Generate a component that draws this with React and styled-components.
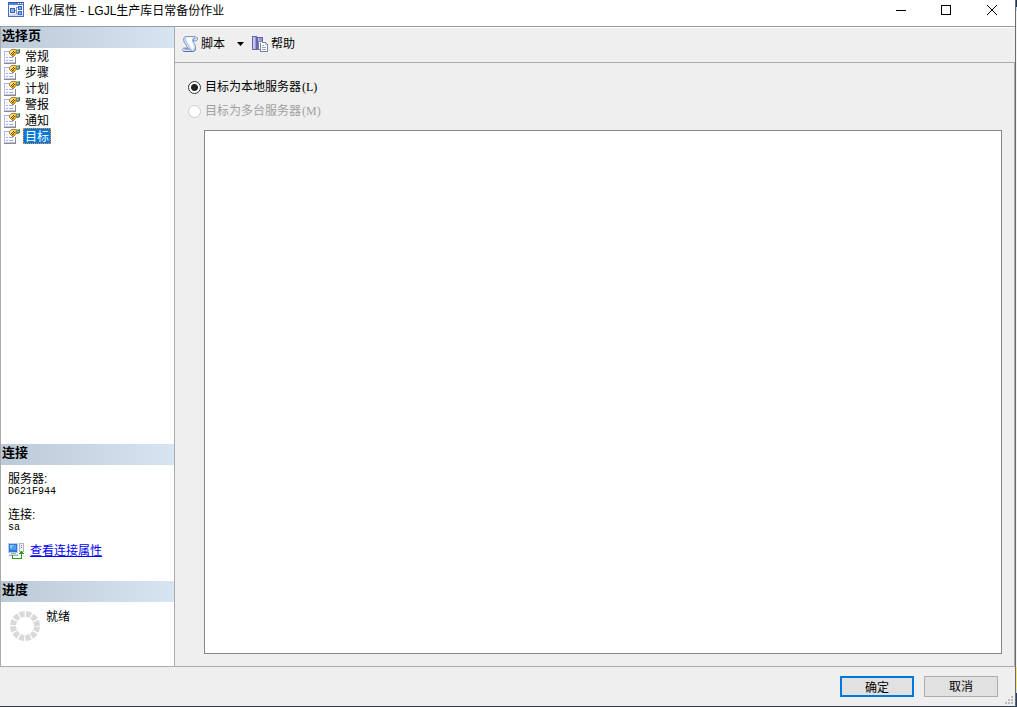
import React, { useState } from "react";
import styled, { createGlobalStyle } from "styled-components";

const GlobalStyle = createGlobalStyle`
*{
  box-sizing:border-box;
}
body{
  margin:0;
  background:linear-gradient(#1f3354 0 7px,#c5dcec 7px 11px,#f4f4f4 11px calc(100% - 40px),#f5e67e calc(100% - 40px) calc(100% - 18px),#d5dce6 calc(100% - 18px) calc(100% - 14px),#2b3c5c calc(100% - 14px));
  color:#000;
  font-family:"Liberation Sans","Noto Sans CJK SC",sans-serif;
  font-size:12px;
  line-height:16px;
}
button,input{
  font:inherit;
  color:inherit;
  margin:0;
}
svg{
  display:block;
  flex:none;
}
`;

const Window = styled.div`
display:flex;
flex-direction:column;
height:100vh;
margin-right:1px;
background:#efefef;
border-right:1px solid #6b6b6b;
border-bottom:1px solid #2c3a4e;
`;

const TitleBar = styled.header`
display:flex;
align-items:center;
height:27px;
padding:0 0 6px 8px;
gap:5px;
background:#fff;
border-bottom:1px solid #9b9b9f;
`;

const Title = styled.h1`
flex:1;
margin:0;
padding-top:2px;
font-size:12px;
font-weight:400;
`;

const WindowControls = styled.div`
display:flex;
`;

const WindowButton = styled.button`
display:flex;
align-items:center;
justify-content:center;
width:${(props) => (props.$narrow ? "45px" : "46px")};
height:20px;
padding:0;
border:none;
background:none;
`;

const Body = styled.div`
display:flex;
flex:1;
min-height:0;
border-bottom:1px solid #a9abb1;
`;

const Sidebar = styled.aside`
display:flex;
flex-direction:column;
width:175px;
background:#fff;
border:solid #a9abb1;
border-width:0 1px;
`;

const PanelTitle = styled.h2`
height:21px;
margin:0;
padding:0 1px;
font-size:13px;
line-height:18px;
font-weight:700;
background:linear-gradient(to right,#bccad8,#d7e4f2);
`;

const PageList = styled.ul`
flex:1;
margin:0;
padding:0;
list-style:none;
`;

const PageButton = styled.button`
display:flex;
align-items:center;
gap:2px;
height:16px;
padding:0 0 0 3px;
border:none;
background:none;
`;

const PageName = styled.span`
height:16px;
padding:0 1px;
line-height:16px;
border:1px ${(props) => (props.$selected ? "dotted #ff8a28" : "solid transparent")};
background:${(props) => (props.$selected ? "#0078d7" : "none")};
color:${(props) => (props.$selected ? "#fff" : "#000")};
`;

const Connection = styled.div`
display:flex;
flex-direction:column;
height:116px;
padding:8px 7px;
`;

const Details = styled.dl`
margin:0;
dt{
  line-height:13px;
}
dd{
  margin:0;
  font-family:"Liberation Mono",monospace;
  font-size:10px;
  line-height:11px;
}
dd + dt{
  margin-top:12px;
}
`;

const LinkRow = styled.div`
display:flex;
align-items:center;
gap:6px;
margin-top:10px;
a{
  color:#0000ff;
}
`;

const Progress = styled.div`
display:flex;
gap:5px;
height:64px;
padding:7px 8px;
`;

const Main = styled.main`
display:flex;
flex:1;
flex-direction:column;
min-width:0;
border-top:1px solid #fff;
`;

const Toolbar = styled.div`
display:flex;
align-items:center;
height:35px;
padding:0 7px 2px;
border-bottom:1px solid #a9abb1;
`;

const ToolButton = styled.button`
display:flex;
align-items:center;
gap:3px;
padding:0;
border:none;
background:none;
`;

const DropButton = styled.button`
display:flex;
align-items:center;
justify-content:center;
width:27px;
height:20px;
padding:0 0 0 3px;
border:none;
background:none;
`;

const Content = styled.div`
display:flex;
flex:1;
flex-direction:column;
padding:12px 12px 12px 13px;
border-right:1px solid #a9abb1;
`;

const Option = styled.label`
display:flex;
align-items:center;
gap:4px;
height:24px;
color:${(props) => (props.$disabled ? "#a0a0a0" : "#000")};
`;

const Shortcut = styled.span`
padding-left:1px;
font-family:"Liberation Serif",serif;
`;

const Radio = styled.input.attrs({ type: "radio" })`
appearance:none;
width:13px;
height:13px;
border:1px solid #333;
border-radius:50%;
background:#fff;
&:checked{
  background:radial-gradient(circle,#222 0 3px,#fff 4px);
}
&:disabled{
  border-color:#ccc;
}
`;

const ServerList = styled.div`
flex:1;
margin:7px 0 0 16px;
border:1px solid #828790;
background:#fff;
`;

const Footer = styled.footer`
display:flex;
position:relative;
justify-content:flex-end;
gap:10px;
height:39px;
padding:9px 17px;
`;

const DialogButton = styled.button`
width:74px;
height:21px;
padding:2px 0 0;
border:${(props) => (props.$primary ? "2px solid #0078d7" : "1px solid #adadad")};
background:#e1e1e1;
line-height:17px;
`;

const Grip = styled.svg`
position:absolute;
right:1px;
bottom:1px;
`;

const JobIcon = () => (
  <svg width="16" height="16" viewBox="0 0 16 16" shapeRendering="crispEdges">
    <path fill="#4a6fc0" d="M0 0h16v15H0z" />
    <path fill="#2f55ac" d="M0 0h16v1H0z" />
    <path fill="#4f86e0" d="M1 1h14v2H1z" />
    <path fill="#fff" d="M10 1h1v1h-1zM12 1h1v1h-1zM14 1h1v1h-1z" />
    <path fill="#f3f7fe" d="M1 3h14v11H1z" />
    <path fill="#cfdcf3" d="M1 12h14v2H1z" />
    <path fill="#7f97c4" d="M7 8h2v1H7zM8 5h1v7H8zM8 5h2v1H8zM8 11h2v1H8z" />
    <path fill="#3e66bb" d="M2 6h5v5H2zM10 4h4v4h-4zM10 9h4v4h-4z" />
    <path fill="#86aef0" d="M3 7h3v3H3zM11 5h2v2h-2zM11 10h2v2h-2z" />
  </svg>
);

const PageIcon = () => (
  <svg width="17" height="16" viewBox="0 0 17 16" shapeRendering="crispEdges">
    <path fill="#fafaff" d="M0 3h12v12H0z" />
    <path fill="#b4b8e8" d="M0 3h6v1H0zM0 3h1v11H0z" />
    <path fill="#8a8a94" d="M11 9h1v6h-1zM0 15h12v1H0z" />
    <path fill="#c3c3cc" d="M0 14h11v1H0z" />
    <path fill="#a3a9e6" d="M2 9h2v1H2zM5 9h4v1H5zM2 12h2v1H2zM5 12h4v1H5z" />
    <path fill="#dfe1f5" d="M2 6h2v1H2z" />
    <path fill="#a58b4b" d="M5 3h1V2h1V1h5v1h1v4h-1v1h-1v1h-1v1H8V8H7V7H6V6H5z" />
    <path fill="#ffd454" d="M6 3h1V2h5v4h-1v1h-1v1H8V7H7V6H6z" />
    <path fill="#fff0a8" d="M7 3h2v1H7zM6 4h1v1H6z" />
    <path fill="#e2a018" d="M9 6h3v1H9zM8 7h2v1H8zM11 3h1v3h-1z" />
    <path fill="#5f4a20" d="M9 3h1v1H9zM8 4h1v1H8zM10 4h1v1h-1zM7 5h1v1H7zM9 5h1v1H9zM8 6h1v1H8z" />
    <path fill="#78915f" d="M12 1h4v4h-1v1h-2V5h-1z" />
    <path fill="#a9bf97" d="M12 1h3v1h-3zM13 3h2v1h-2z" />
    <path fill="#536b4c" d="M15 2h1v3h-1z" />
  </svg>
);

const ScriptIcon = () => (
  <svg width="16" height="16" viewBox="0 0 16 16">
    <path fill="#dce7f9" stroke="#7d94bf" d="M3.500.5h9c2 0 3 1 3 2.500s-1 2-2.500 2h-2c0 2 2.500 3 2.500 6 0 3-1 4.500-3 4.500h-8c-1.500 0-2-1-2-2s1-1.500 2-1.500h3c0-3-4-4.500-4-8.500 0-1.500.5-2.500 2-2.500z" />
    <path fill="#fff" d="M4 1.500h6c-1.500 4 1.500 6 1.500 9l-1 2.500c-1-1-1-2-3-2.500C7.500 8 3.500 5 4 1.500z" />
    <path fill="#b6cbed" d="M2 2.500c0-1 2-1 2 .5 0 3 4 5 4 9l-1 .5C7 8 2 6 2 2.500z" />
    <path fill="none" stroke="#5571a6" d="M1.500 15.500h9c2 0 3-1 3-3M2.500 13h5c1 0 1 1.500 2 2M11 5c0-3 1.500-3.500 2.500-2" />
  </svg>
);

const HelpIcon = () => (
  <svg width="16" height="16" viewBox="0 0 16 16" shapeRendering="crispEdges">
    <path fill="#6564a8" d="M0 0h5v14H0zM5 1h6v13H5z" />
    <path fill="#9899d5" d="M1 1h3v12H1zM6 2h4v11H6z" />
    <path fill="#c3c5ee" d="M1 1h2v12H1zM6 2h1v11H6z" />
    <path fill="#7a83a4" d="M6 5h5v1h3v1h1v1h1v8H8v-2H6z" />
    <path fill="#fff" d="M7 6h3v1H8v6H7zM9 7h4v2h2v6H9z" />
    <path fill="#8cadca" d="M10 9h2v1h-2zM10 11h4v1h-4zM10 13h4v1h-4z" />
    <path fill="#b9cbe0" d="M13 7h1v1h1v1h-2z" />
  </svg>
);

const ConnectionIcon = () => (
  <svg width="16" height="16" viewBox="0 0 16 16" shapeRendering="crispEdges">
    <path fill="#bccbe5" d="M0 0h10v10H0z" />
    <path fill="#2d77da" d="M1 1h8v8H1z" />
    <path fill="#4c9bf0" d="M2 2h6v5H2z" />
    <path fill="#8fcaff" d="M2 2h4v1H2zM2 3h2v2H2z" />
    <path fill="#a3adbd" d="M3 10h5v1H3zM1 12h9v1H1z" />
    <path fill="#d7dbe2" d="M1 11h9v1H1z" />
    <path fill="#b0b6c1" d="M11 0h5v9h-5z" />
    <path fill="#f2f4f7" d="M12 1h3v7h-3z" />
    <path fill="#6d7c93" d="M13 2h1v1h-1zM13 4h1v1h-1z" />
    <path fill="#269c19" d="M4 12h1v3h8v-4h-2v-1h1V9h1V8h1v1h1v1h1v1h-2v5H4z" />
  </svg>
);

const ProgressRing = () => (
  <svg width="32" height="34" viewBox="0 0 32 34">
    <circle cx="16" cy="17" r="12" fill="none" stroke="#d9d9d9" strokeWidth="6" strokeDasharray="5 1.283" strokeDashoffset="-0.64" />
  </svg>
);

const pages = ["常规", "步骤", "计划", "警报", "通知", "目标"];

const App = () => {
  const [page, setPage] = useState("目标");

  return (
    <>
      <GlobalStyle />
      <Window>
        <TitleBar>
          <JobIcon />
          <Title>作业属性 - LGJL生产库日常备份作业</Title>
          <WindowControls>
            <WindowButton $narrow aria-label="最小化">
              <svg width="10" height="10" shapeRendering="crispEdges"><path d="M0 5h10v1H0z" /></svg>
            </WindowButton>
            <WindowButton aria-label="最大化">
              <svg width="10" height="10" shapeRendering="crispEdges"><path fill="none" stroke="#000" d="M.5.5h9v9h-9z" /></svg>
            </WindowButton>
            <WindowButton aria-label="关闭">
              <svg width="10" height="10"><path fill="none" stroke="#000" d="M0 0l10 10M10 0L0 10" /></svg>
            </WindowButton>
          </WindowControls>
        </TitleBar>
        <Body>
          <Sidebar>
            <PanelTitle>选择页</PanelTitle>
            <PageList>
              {pages.map((name) => (
                <li key={name}>
                  <PageButton onClick={() => setPage(name)}>
                    <PageIcon />
                    <PageName $selected={page === name}>{name}</PageName>
                  </PageButton>
                </li>
              ))}
            </PageList>
            <PanelTitle>连接</PanelTitle>
            <Connection>
              <Details>
                <dt>服务器:</dt>
                <dd>D621F944</dd>
                <dt>连接:</dt>
                <dd>sa</dd>
              </Details>
              <LinkRow>
                <ConnectionIcon />
                <a href="#connection">查看连接属性</a>
              </LinkRow>
            </Connection>
            <PanelTitle>进度</PanelTitle>
            <Progress>
              <ProgressRing />
              <span>就绪</span>
            </Progress>
          </Sidebar>
          <Main>
            <Toolbar>
              <ToolButton><ScriptIcon />脚本</ToolButton>
              <DropButton aria-label="脚本选项">
                <svg width="7" height="4"><path d="M0 0h7L3.500 4z" /></svg>
              </DropButton>
              <ToolButton><HelpIcon />帮助</ToolButton>
            </Toolbar>
            <Content>
              <Option>
                <Radio name="target" defaultChecked />
                <span>目标为本地服务器<Shortcut>(L)</Shortcut></span>
              </Option>
              <Option $disabled>
                <Radio name="target" disabled />
                <span>目标为多台服务器<Shortcut>(M)</Shortcut></span>
              </Option>
              <ServerList />
            </Content>
          </Main>
        </Body>
        <Footer>
          <DialogButton $primary>确定</DialogButton>
          <DialogButton>取消</DialogButton>
          <Grip width="9" height="9" fill="#bdbdbd" shapeRendering="crispEdges">
            <path d="M6 0h2v2H6zM3 3h2v2H3zM6 3h2v2H6zM0 6h2v2H0zM3 6h2v2H3zM6 6h2v2H6z" />
          </Grip>
        </Footer>
      </Window>
    </>
  );
};
export default App;
